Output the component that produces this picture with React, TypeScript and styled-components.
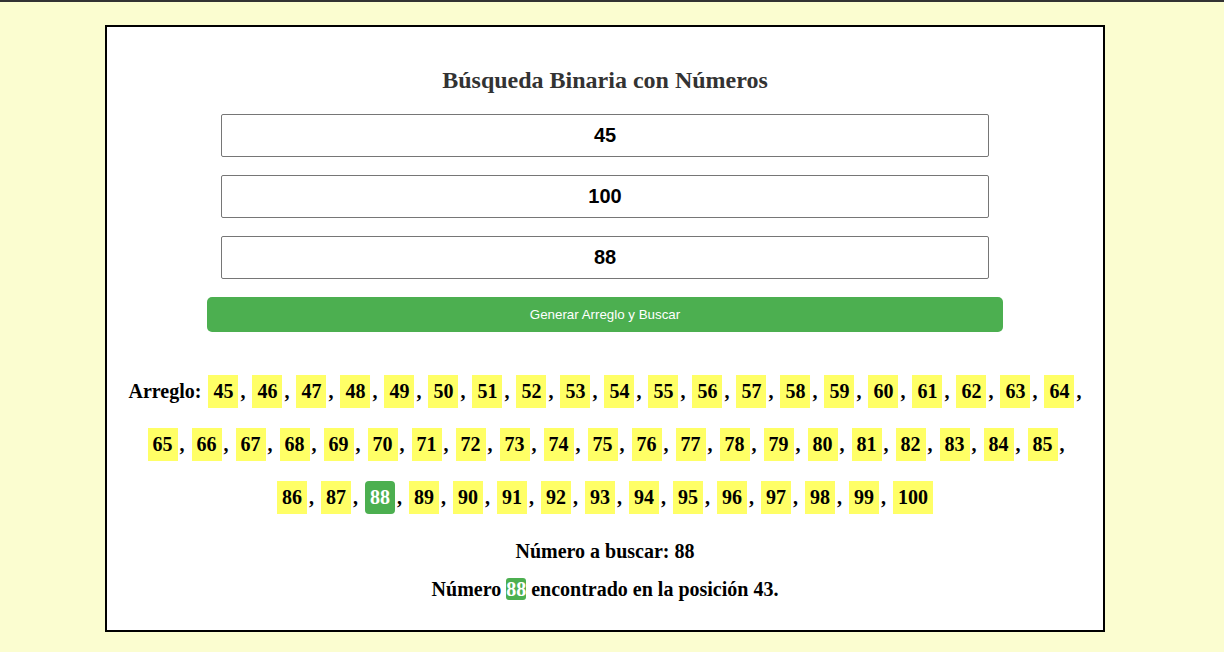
import styled, { createGlobalStyle } from 'styled-components';

const GlobalStyle = createGlobalStyle`
  body {
    margin: 0;
    background: #fbfdd0;
    font-family: 'Liberation Serif', 'Times New Roman', serif;
  }
`;

const TopBar = styled.div`
  height: 2px;
  background: #333;
`;

const Card = styled.main`
  box-sizing: border-box;
  width: 1000px;
  margin: 23px 0 0 105px;
  padding: 20px;
  border: 2px solid #000;
  background: #fff;
  text-align: center;
`;

const Title = styled.h2`
  margin: 20px 0 20px;
  font-size: 24px;
  font-weight: bold;
  color: #333;
`;

const NumberInput = styled.input`
  display: block;
  box-sizing: border-box;
  width: 768px;
  height: 43px;
  margin: 0 auto 18px;
  border: 1px solid #767676;
  border-radius: 2px;
  background: #fff;
  color: #000;
  font-family: 'Liberation Sans', Arial, sans-serif;
  font-size: 20px;
  font-weight: bold;
  text-align: center;
`;

const SearchButton = styled.button`
  display: block;
  width: 796px;
  height: 35px;
  margin: 0 auto;
  border: none;
  border-radius: 5px;
  background: #4caf50;
  color: #fff;
  font-family: 'Liberation Sans', Arial, sans-serif;
  font-size: 13.333px;
  cursor: pointer;
`;

const ArrayBlock = styled.div`
  margin-top: 33px;
  font-size: 20px;
  font-weight: bold;
  color: #000;
`;

const Item = styled.span`
  white-space: nowrap;
`;

const Cell = styled.span<{ $found?: boolean }>`
  display: inline-block;
  padding: 5px;
  margin: 10px 2px;
  background: ${(p) => (p.$found ? '#4caf50' : '#ffff66')};
  color: ${(p) => (p.$found ? '#fff' : '#000')};
  border-radius: ${(p) => (p.$found ? '4px' : '0')};
`;

const Result = styled.p`
  margin: 16px 0 0;
  font-size: 20px;
  font-weight: bold;
  color: #000;

  & + & {
    margin: 15px 0 9px;
  }
`;

const Mark = styled.span`
  background: #4caf50;
  color: #fff;
  border-radius: 3px;
`;

const start = 45;
const end = 100;
const target = 88;
const numbers = Array.from({ length: end - start + 1 }, (_, i) => start + i);
const position = numbers.indexOf(target);

export default function App() {
  return (
    <>
      <GlobalStyle />
      <TopBar />
      <Card>
        <Title>Búsqueda Binaria con Números</Title>
        <NumberInput type="text" defaultValue={start} />
        <NumberInput type="text" defaultValue={end} />
        <NumberInput type="text" defaultValue={target} />
        <SearchButton>Generar Arreglo y Buscar</SearchButton>
        <ArrayBlock>
          Arreglo:{' '}
          {numbers.map((n, i) => (
            <span key={n}>
              <Item>
                <Cell $found={n === target}>{n}</Cell>
                {i < numbers.length - 1 ? ',' : ''}
              </Item>
              {i < numbers.length - 1 ? ' ' : ''}
            </span>
          ))}
        </ArrayBlock>
        <Result>Número a buscar: {target}</Result>
        <Result>
          Número <Mark>{target}</Mark> encontrado en la posición {position}.
        </Result>
      </Card>
    </>
  );
}
